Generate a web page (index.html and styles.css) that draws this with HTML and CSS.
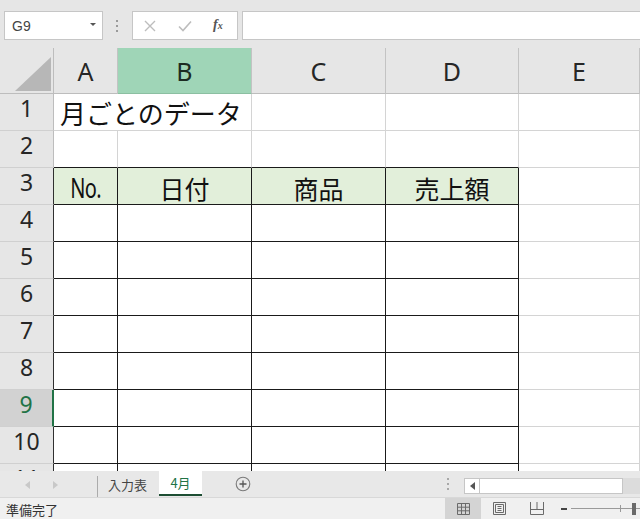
FILE: index.html
```html
<!DOCTYPE html>
<html lang="ja">
<head>
<meta charset="utf-8">
<title>Excel</title>
<link rel="stylesheet" href="styles.css">
</head>
<body>
<div class="app">
  <div class="fbar">
    <div class="namebox"><span>G9</span><span class="dd"></span></div>
    <div class="vdots"><i></i><i></i><i></i></div>
    <div class="fbtns">
      <svg class="ico-x" width="12" height="12" viewBox="0 0 12 12"><path d="M1 1L11 11M11 1L1 11" stroke="#bdbdbd" stroke-width="1.4" fill="none"/></svg>
      <svg class="ico-ok" width="14" height="12" viewBox="0 0 14 12"><path d="M1 6.5L5 10.5L13 1.5" stroke="#bdbdbd" stroke-width="1.6" fill="none"/></svg>
      <span class="fx">f<span class="fxs">x</span></span>
    </div>
    <div class="finput"></div>
  </div>

  <div class="sheet">
    <div class="corner"><svg width="54" height="46" viewBox="0 0 54 46"><path d="M15 43L51 43L51 9Z" fill="#b7b7b7"/></svg></div>
    <div class="ch">A</div><div class="ch sel">B</div><div class="ch">C</div><div class="ch">D</div><div class="ch">E</div>

    <div class="rh">1</div><div class="c span2 title">月ごとのデータ</div><div class="c"></div><div class="c"></div><div class="c"></div>
    <div class="rh">2</div><div class="c tt"></div><div class="c tt"></div><div class="c tt"></div><div class="c tt"></div><div class="c"></div>
    <div class="rh tb">3</div><div class="c t th"><span class="no">No.</span></div><div class="c t th">日付</div><div class="c t th">商品</div><div class="c t th">売上額</div><div class="c"></div>
    <div class="rh tb">4</div><div class="c t"></div><div class="c t"></div><div class="c t"></div><div class="c t"></div><div class="c"></div>
    <div class="rh tb">5</div><div class="c t"></div><div class="c t"></div><div class="c t"></div><div class="c t"></div><div class="c"></div>
    <div class="rh tb">6</div><div class="c t"></div><div class="c t"></div><div class="c t"></div><div class="c t"></div><div class="c"></div>
    <div class="rh tb">7</div><div class="c t"></div><div class="c t"></div><div class="c t"></div><div class="c t"></div><div class="c"></div>
    <div class="rh tb">8</div><div class="c t"></div><div class="c t"></div><div class="c t"></div><div class="c t"></div><div class="c"></div>
    <div class="rh tb sel">9</div><div class="c t"></div><div class="c t"></div><div class="c t"></div><div class="c t"></div><div class="c"></div>
    <div class="rh tb">10</div><div class="c t"></div><div class="c t"></div><div class="c t"></div><div class="c t"></div><div class="c"></div>
    <div class="rh tb">11</div><div class="c t"></div><div class="c t"></div><div class="c t"></div><div class="c t"></div><div class="c"></div>
  </div>

  <div class="tabbar">
    <div class="nav">
      <svg width="6" height="8" viewBox="0 0 6 8"><path d="M5 0L5 8L0 4Z" fill="#c8c8c8"/></svg>
      <svg width="6" height="8" viewBox="0 0 6 8"><path d="M1 0L1 8L6 4Z" fill="#c8c8c8"/></svg>
    </div>
    <div class="tabs">
      <div class="tab">入力表</div>
      <div class="tab active">4月</div>
    </div>
    <div class="add"><svg width="16" height="16" viewBox="0 0 16 16"><circle cx="8" cy="8" r="6.8" fill="none" stroke="#7a7a7a" stroke-width="1.1"/><path d="M8 4.5V11.5M4.5 8H11.5" stroke="#555" stroke-width="1.3"/></svg></div>
    <div class="grow"></div>
    <div class="vdots small"><i></i><i></i><i></i></div>
    <div class="hscroll">
      <div class="harrow"><svg width="5" height="8" viewBox="0 0 5 8"><path d="M5 0L5 8L0 4Z" fill="#555"/></svg></div>
    </div>
    <div class="hrest"></div>
  </div>

  <div class="status">
    <div class="ready">準備完了</div>
    <div class="grow"></div>
    <div class="view on"><svg width="13" height="12" viewBox="0 0 13 12"><path d="M0.5 0.5H12.5V11.5H0.5Z M0.5 4.2H12.5 M0.5 7.8H12.5 M4.5 0.5V11.5 M8.5 0.5V11.5" stroke="#6a6a6a" fill="none"/></svg></div>
    <div class="view"><svg width="13" height="13" viewBox="0 0 13 13"><path d="M0.5 0.5H12.5V12.5H0.5Z M2.5 2.5H10.5V10.5H2.5Z M4.5 4.5H8.5 M4.5 6.5H8.5 M4.5 8.5H8.5" stroke="#6a6a6a" fill="none"/></svg></div>
    <div class="view"><svg width="14" height="13" viewBox="0 0 14 13"><path d="M0.5 0V12.5H13.5V0 M0.5 7.5H13.5 M7 0V7.5" stroke="#6a6a6a" fill="none"/></svg></div>
    <div class="zoom">
      <span class="minus"></span>
      <div class="track"><span class="tick"></span><span class="thumb"></span></div>
    </div>
  </div>
</div>
</body>
</html>
```

FILE: styles.css
```css
html, body {
  margin: 0;
  padding: 0;
}
body {
  width: 640px;
  height: 519px;
  overflow: hidden;
  background: #e6e6e6;
  font-family: "Noto Sans CJK JP", sans-serif;
}
.app {
  display: flex;
  flex-direction: column;
  width: 640px;
  height: 519px;
}

/* formula bar */
.fbar {
  height: 48px;
  flex: none;
  box-sizing: border-box;
  display: flex;
  align-items: flex-start;
  padding: 11px 0 0 4px;
  background: #e6e6e6;
}
.namebox {
  width: 99px;
  height: 29px;
  box-sizing: border-box;
  background: #fff;
  border: 1px solid #c6c6c6;
  display: flex;
  align-items: center;
  justify-content: space-between;
  padding: 0 6px 0 7px;
  font-family: "Liberation Sans", sans-serif;
  font-size: 14px;
  color: #444;
}
.dd {
  width: 0;
  height: 0;
  border-left: 3px solid transparent;
  border-right: 3px solid transparent;
  border-top: 3px solid #555;
  margin-bottom: 2px;
}
.vdots {
  width: 3px;
  height: 29px;
  margin: 0 13px 0 13px;
  display: flex;
  flex-direction: column;
  justify-content: center;
  gap: 3px;
}
.vdots i {
  display: block;
  width: 2px;
  height: 2px;
  background: #9a9a9a;
}
.fbtns {
  width: 106px;
  height: 29px;
  box-sizing: border-box;
  background: #fff;
  border: 1px solid #c6c6c6;
  display: flex;
  align-items: center;
  padding-left: 11px;
}
.ico-x { margin-right: 22px; }
.ico-ok { margin-right: 21px; }
.fx {
  font-family: "Liberation Serif", serif;
  font-style: italic;
  font-weight: bold;
  font-size: 14px;
  color: #555;
  margin-top: -2px;
}
.fxs {
  font-size: 10px;
}
.finput {
  flex: 1;
  height: 29px;
  margin-left: 4px;
  box-sizing: border-box;
  background: #fff;
  border: 1px solid #c6c6c6;
  border-right: none;
}

/* sheet grid */
.sheet {
  flex: none;
  height: 423px;
  overflow: hidden;
  display: grid;
  grid-template-columns: 54px 64px 134px 134px 133px 121px;
  grid-template-rows: 46px repeat(11, 37px);
  background: #fff;
}
.corner {
  background: #e6e6e6;
  border-right: 1px solid #bdbdbd;
  border-bottom: 1px solid #bdbdbd;
  box-sizing: border-box;
  overflow: hidden;
}
.corner svg { display: block; }
.ch {
  background: #e6e6e6;
  box-sizing: border-box;
  border-right: 1px solid #c3c3c3;
  border-bottom: 1px solid #bdbdbd;
  display: flex;
  align-items: center;
  justify-content: center;
  font-family: "Noto Sans", sans-serif;
  font-size: 25px;
  color: #262626;
  padding-top: 1px;
}
.ch.sel {
  background: #9fd5b7;
  border-bottom-color: #8bbfa1;
  color: #1c2b22;
}
.rh {
  background: #e6e6e6;
  box-sizing: border-box;
  border-right: 1px solid #bdbdbd;
  border-bottom: 1px solid #d0d0d0;
  display: flex;
  align-items: center;
  justify-content: center;
  font-family: "Noto Sans", sans-serif;
  font-size: 23px;
  color: #262626;
  padding-bottom: 9px;
}
.rh.tb { border-right-color: #303030; }
.rh.sel {
  background: #d2d2d2;
  color: #217346;
  border-right: 2px solid #217346;
}
.c {
  box-sizing: border-box;
  border-right: 1px solid #d4d4d4;
  border-bottom: 1px solid #d4d4d4;
  background: #fff;
  display: flex;
  align-items: center;
  font-size: 25px;
  color: #111;
  white-space: nowrap;
}
.span2 { grid-column: span 2; }
.title {
  padding-left: 6px;
  font-size: 26px;
  padding-top: 1px;
}
.c.tt { border-bottom-color: #1a1a1a; }
.c.t {
  border-right-color: #1a1a1a;
  border-bottom-color: #1a1a1a;
}
.c.th {
  background: #e2efda;
  justify-content: center;
  padding-top: 3px;
}
.no {
  display: inline-block;
  font-family: "Noto Sans", sans-serif;
  font-size: 27px;
  font-weight: 400;
  color: #111;
  transform: scaleX(0.74);
  letter-spacing: -1px;
}

/* tab bar */
.tabbar {
  height: 26px;
  flex: none;
  display: flex;
  align-items: stretch;
  background: #e8e8e8;
}
.nav {
  width: 97px;
  display: flex;
  align-items: center;
  padding-left: 25px;
  box-sizing: border-box;
  gap: 21px;
  padding-top: 2px;
}
.tabs {
  display: flex;
  border-left: 1px solid #ababab;
  margin-top: 5px;
}
.tab {
  font-size: 13px;
  color: #444;
  display: flex;
  align-items: center;
  padding: 0 12px 0 10px;
  margin-top: -5px;
}
.tab.active {
  background: #fff;
  color: #217346;
  width: 43px;
  box-sizing: border-box;
  justify-content: center;
  padding: 0 0 0 0;
  border-bottom: 2px solid #1d4e33;
  margin-bottom: 1px;
}
.add {
  display: flex;
  align-items: center;
  margin-left: 33px;
}
.grow { flex: 1; }
.vdots.small {
  width: 2px;
  height: 26px;
  margin: 0 15px 0 0;
}
.vdots.small i { background: #a8a8a8; width: 2px; height: 2px; }
.hscroll {
  width: 159px;
  height: 16px;
  margin-top: 7px;
  box-sizing: border-box;
  background: #fff;
  border: 1px solid #c6c6c6;
  display: flex;
}
.harrow {
  width: 14px;
  border-right: 1px solid #c6c6c6;
  display: flex;
  align-items: center;
  justify-content: center;
}
.hrest {
  width: 17px;
  height: 16px;
  margin-top: 7px;
  background: #dcdcdc;
}

/* status bar */
.status {
  flex: 1;
  display: flex;
  align-items: stretch;
  background: #f0f0f0;
  border-top: 1px solid #d8d8d8;
}
.ready {
  font-size: 13px;
  color: #333;
  padding-left: 6px;
  display: flex;
  align-items: center;
  padding-top: 2px;
}
.view {
  width: 37px;
  display: flex;
  align-items: center;
  justify-content: center;
}
.view.on {
  width: 36px;
  background: #d4d4d4;
}
.zoom {
  width: 85px;
  display: flex;
  align-items: center;
  padding-left: 6px;
  box-sizing: border-box;
}
.minus {
  width: 6px;
  height: 2px;
  background: #444;
  margin-right: 4px;
}
.track {
  flex: 1;
  height: 1px;
  background: #9a9a9a;
  display: flex;
  align-items: center;
  justify-content: flex-end;
}
.tick {
  width: 1px;
  height: 7px;
  background: #9a9a9a;
  margin-right: 11px;
}
.thumb {
  width: 4px;
  height: 12px;
  background: #6a6a6a;
  margin-right: 4px;
}
```
